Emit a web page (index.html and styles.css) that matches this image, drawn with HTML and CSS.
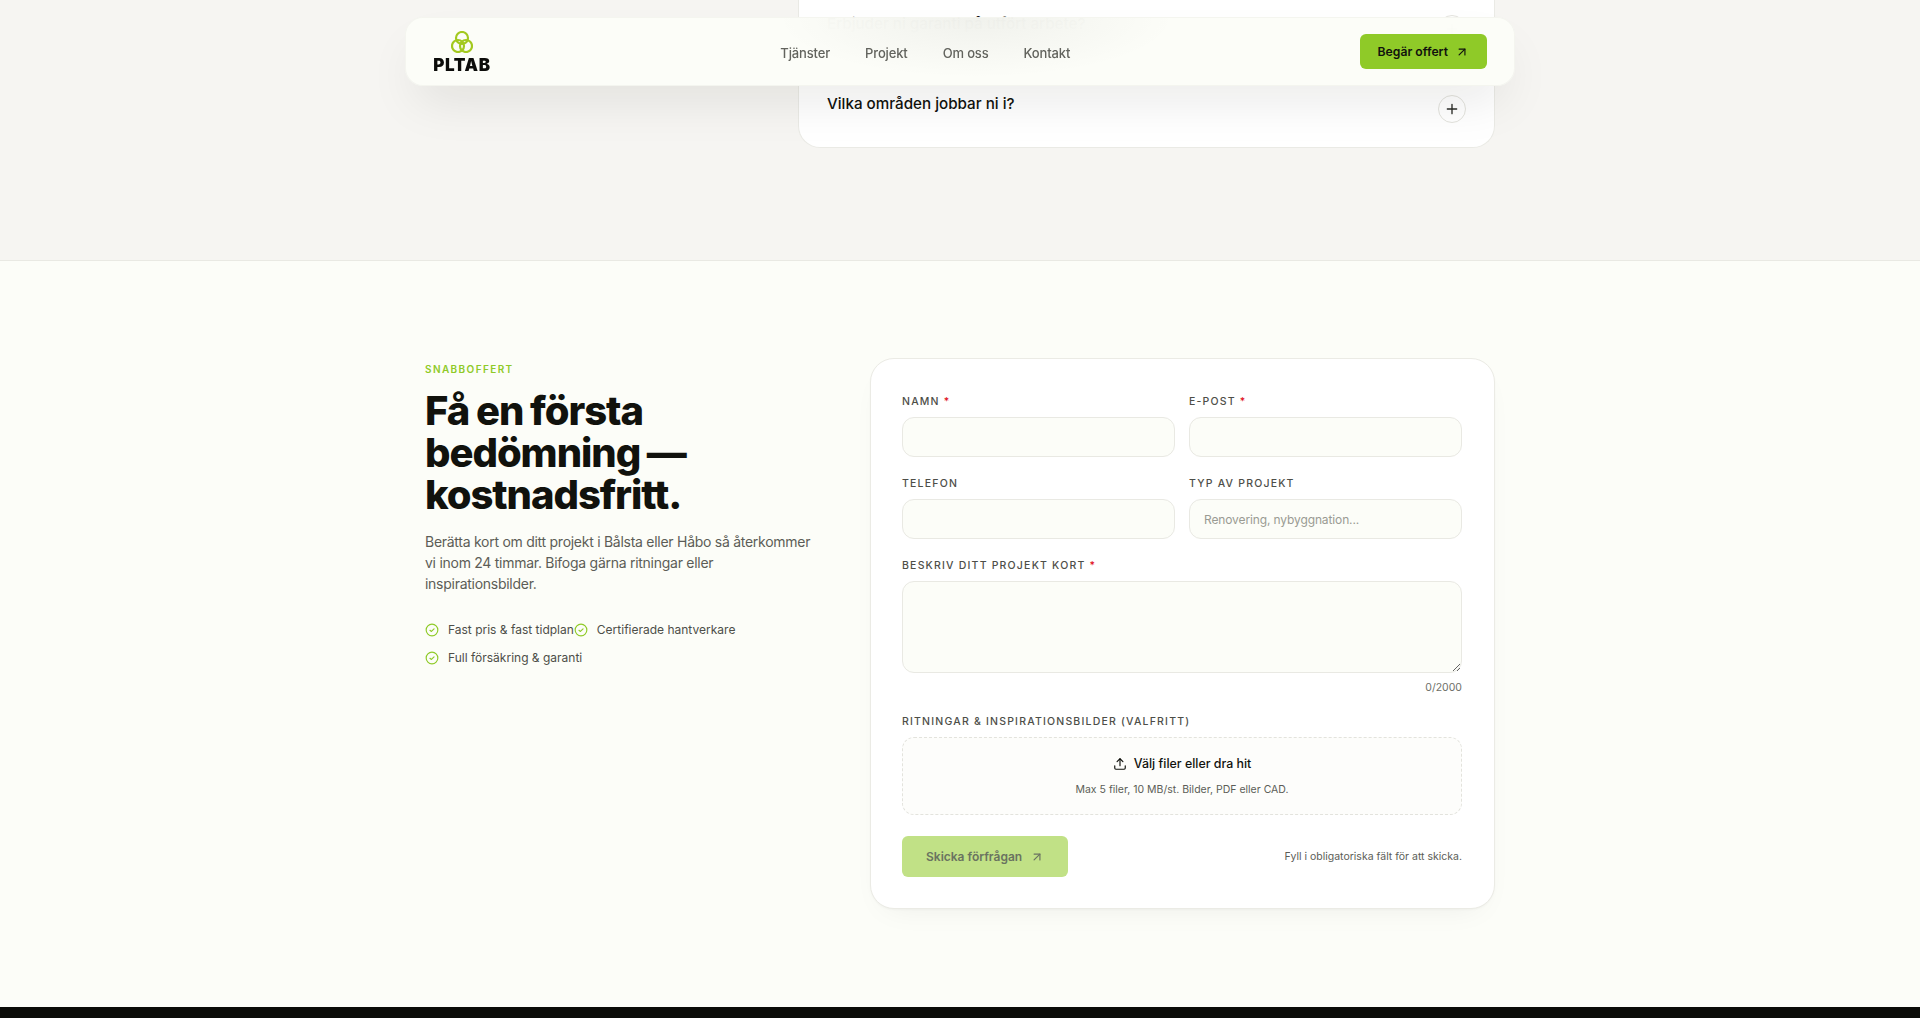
FILE: index.html
```html
<!DOCTYPE html>
<html lang="sv">
<head>
<meta charset="utf-8">
<title>PLTAB</title>
<link rel="stylesheet" href="styles.css">
</head>
<body>
<header class="nav">
  <a class="logo" href="#">
    <svg class="logo-mark" viewBox="0 0 22 22" width="22" height="22" fill="none" stroke="#a3c91f" stroke-width="2.2">
      <circle cx="11" cy="7" r="6"/>
      <circle cx="7" cy="15" r="6"/>
      <circle cx="15" cy="15" r="6"/>
    </svg>
    <span class="logo-text">PLTAB</span>
  </a>
  <nav class="nav-links">
    <a href="#">Tjänster</a>
    <a href="#">Projekt</a>
    <a href="#">Om oss</a>
    <a href="#">Kontakt</a>
  </nav>
  <a class="nav-cta" href="#">Begär offert
    <svg viewBox="0 0 24 24" width="14" height="14" fill="none" stroke="currentColor" stroke-width="2" stroke-linecap="round" stroke-linejoin="round"><path d="M7 7h10v10"/><path d="M7 17 17 7"/></svg>
  </a>
</header>

<section class="faq-section">
  <div class="container faq-grid">
    <div class="faq-card">
      <div class="faq-item faq-hidden">
        <h3>Erbjuder ni garanti på utfört arbete?</h3>
        <span class="faq-toggle"><svg viewBox="0 0 24 24" width="16" height="16" fill="none" stroke="currentColor" stroke-width="2" stroke-linecap="round"><path d="M5 12h14M12 5v14"/></svg></span>
      </div>
      <div class="faq-item">
        <h3>Vilka områden jobbar ni i?</h3>
        <span class="faq-toggle"><svg viewBox="0 0 24 24" width="16" height="16" fill="none" stroke="currentColor" stroke-width="2" stroke-linecap="round"><path d="M5 12h14M12 5v14"/></svg></span>
      </div>
    </div>
  </div>
</section>

<section class="quote-section">
  <div class="container quote-grid">
    <div class="intro">
      <p class="eyebrow">SNABBOFFERT</p>
      <h2>Få en första bedömning — kostnadsfritt.</h2>
      <p class="lead">Berätta kort om ditt projekt i Bålsta eller Håbo så återkommer vi inom 24 timmar. Bifoga gärna ritningar eller inspirationsbilder.</p>
      <ul class="perks">
        <li><svg class="check" viewBox="0 0 24 24" width="14" height="14" fill="none" stroke="#8fca28" stroke-width="2" stroke-linecap="round" stroke-linejoin="round"><circle cx="12" cy="12" r="10"/><path d="m8.5 12.5 2.5 2 4.5-4.5"/></svg>Fast pris &amp; fast tidplan</li>
        <li><svg class="check" viewBox="0 0 24 24" width="14" height="14" fill="none" stroke="#8fca28" stroke-width="2" stroke-linecap="round" stroke-linejoin="round"><circle cx="12" cy="12" r="10"/><path d="m8.5 12.5 2.5 2 4.5-4.5"/></svg>Certifierade hantverkare</li>
        <li><svg class="check" viewBox="0 0 24 24" width="14" height="14" fill="none" stroke="#8fca28" stroke-width="2" stroke-linecap="round" stroke-linejoin="round"><circle cx="12" cy="12" r="10"/><path d="m8.5 12.5 2.5 2 4.5-4.5"/></svg>Full försäkring &amp; garanti</li>
      </ul>
    </div>
    <form class="form-card">
      <div class="two-col">
        <label class="field"><span class="label">NAMN <em>*</em></span><input class="input" type="text"></label>
        <label class="field"><span class="label">E-POST <em>*</em></span><input class="input" type="email"></label>
        <label class="field"><span class="label">TELEFON</span><input class="input" type="tel"></label>
        <label class="field"><span class="label">TYP AV PROJEKT</span><input class="input" type="text" placeholder="Renovering, nybyggnation..."></label>
      </div>
      <label class="field field-desc"><span class="label">BESKRIV DITT PROJEKT KORT <em>*</em></span><textarea class="input textarea"></textarea></label>
      <p class="counter">0/2000</p>
      <div class="field">
        <span class="label">RITNINGAR &amp; INSPIRATIONSBILDER (VALFRITT)</span>
        <div class="drop">
          <div class="drop-title"><svg viewBox="0 0 24 24" width="14" height="14" fill="none" stroke="currentColor" stroke-width="2" stroke-linecap="round" stroke-linejoin="round"><path d="M21 15v4a2 2 0 0 1-2 2H5a2 2 0 0 1-2-2v-4"/><path d="m17 8-5-5-5 5"/><path d="M12 3v12"/></svg>Välj filer eller dra hit</div>
          <div class="drop-sub">Max 5 filer, 10 MB/st. Bilder, PDF eller CAD.</div>
        </div>
      </div>
      <div class="form-foot">
        <button class="submit" type="button">Skicka förfrågan
          <svg viewBox="0 0 24 24" width="14" height="14" fill="none" stroke="currentColor" stroke-width="2" stroke-linecap="round" stroke-linejoin="round"><path d="M7 7h10v10"/><path d="M7 17 17 7"/></svg>
        </button>
        <span class="hint">Fyll i obligatoriska fält för att skicka.</span>
      </div>
    </form>
  </div>
</section>
<footer class="footer"></footer>
</body>
</html>
```

FILE: styles.css
```css
* { box-sizing: border-box; }
html, body { margin: 0; height: 1018px; overflow: hidden; }
body { font-family: Inter, "Liberation Sans", sans-serif; color: #11120d; background: #fcfdf8; }
a { color: inherit; text-decoration: none; }

.container { width: 1070px; margin: 0 auto; }

.nav {
  position: fixed; z-index: 10; top: 17px; left: 405px; width: 1110px; height: 69px;
  display: flex; align-items: center; justify-content: space-between;
  padding: 0 27px 0 27px;
  background: rgba(252, 253, 248, .97);
  backdrop-filter: blur(20px);
  border: 1px solid rgba(17, 18, 13, .035);
  border-radius: 18px;
  box-shadow: 0 24px 50px -12px rgba(17, 18, 13, .10);
}
.nav::before {
  content: ""; position: absolute; top: 0; left: 370px; width: 400px; height: 60px;
  background: radial-gradient(ellipse 50% 100% at 50% 0, rgba(17, 18, 13, .05), transparent);
  pointer-events: none;
}
.logo { position: relative; display: flex; flex-direction: column; align-items: center; width: 58px; margin-top: 2px; }
.logo-mark { display: block; margin: 0 1px 2px 0; }
.logo-text { font: 900 17px/20px Inter, "Liberation Sans", sans-serif; letter-spacing: .6px; color: #0c0c0a; }
.nav-links { position: relative; display: flex; gap: 35px; font-size: 13px; font-weight: 500; letter-spacing: -.15px; color: #62635d; padding-top: 3px; }
.nav-cta {
  position: relative; display: flex; align-items: center; gap: 7px; height: 35px; padding: 0 18px;
  background: #8fca28; border-radius: 6px; font-size: 12.2px; font-weight: 600; color: #11120d;
}

.faq-section { height: 261px; background: #f6f5f2; border-bottom: 1px solid #e9e9e3; overflow: hidden; }
.faq-grid { display: flex; justify-content: flex-end; }
.faq-card {
  width: 697px; height: 148px; padding: 0 28px; display: flex; flex-direction: column;
  background: #fff; border: 1px solid #eaeae5; border-top: 0; border-radius: 0 0 22px 22px;
}
.faq-item { display: flex; justify-content: space-between; align-items: flex-start; }
.faq-item h3 { margin: 0; font-size: 15.2px; line-height: 24px; font-weight: 500; color: #11120d; }
.faq-hidden { height: 92px; padding-top: 12px; }
.faq-toggle {
  width: 28px; height: 28px; margin-top: 3px; border: 1px solid #e3e3dd; border-radius: 50%;
  display: flex; align-items: center; justify-content: center; color: #2a2b26;
}

.quote-section { padding: 97px 0 0; height: 746px; }
.quote-grid { display: flex; justify-content: space-between; align-items: flex-start; }
.intro { width: 400px; }
.eyebrow { margin: 0; padding-top: 3px; font-size: 10px; line-height: 16px; font-weight: 600; letter-spacing: 1.4px; color: #8fca28; }
.intro h2 { margin: 13px 0 0; font-size: 40px; line-height: 42px; font-weight: 800; letter-spacing: -1.05px; word-spacing: -1px; color: #11120d; }
.lead { margin: 15px 0 0; max-width: 390px; font-size: 14px; line-height: 21px; letter-spacing: -.27px; color: #5c5d57; }
.perks { list-style: none; padding: 0; margin: 27px 0 0; display: flex; flex-wrap: wrap; row-gap: 10px; font-size: 12px; line-height: 18px; color: #4d4e48; }
.perks li { display: flex; align-items: center; gap: 9px; }
.perks li:nth-child(3) { flex-basis: 100%; }
.check { flex: none; }

.form-card {
  width: 625px; height: 551px; padding: 35px 32px 31px 31px; background: #fff;
  border: 1px solid #ebebe5; border-radius: 24px;
  box-shadow: 0 1px 2px rgba(17, 18, 13, .03), 0 12px 32px -16px rgba(17, 18, 13, .08);
}
.two-col { display: grid; grid-template-columns: 1fr 1fr; gap: 19px 14px; }
.field { display: block; }
.label { display: block; font-size: 10.5px; line-height: 16px; font-weight: 500; letter-spacing: 1.2px; color: #4d4e48; margin-bottom: 7px; }
.label em { font-style: normal; color: #e0101c; }
.input {
  display: block; width: 100%; height: 40px; padding: 0 14px; background: #fcfdf8;
  border: 1px solid #e9e9e3; border-radius: 12px; font: 400 12px Inter, sans-serif; letter-spacing: -.12px; color: #11120d; outline: none;
}
.input::placeholder { color: #9a9b93; opacity: 1; }
.field-desc { margin-top: 19px; }
.textarea { height: 92px; padding: 10px 14px; resize: vertical; }
.counter { margin: 7px 0 0; text-align: right; font-size: 10.5px; line-height: 16px; color: #6e6f68; }
.counter + .field { margin-top: 18px; }
.drop {
  height: 78px; border: 1px dashed #e3e3dd; border-radius: 12px; background: #fdfdfb;
  display: flex; flex-direction: column; align-items: center; padding-top: 17px;
}
.drop-title { display: flex; align-items: center; gap: 7px; font-size: 12.4px; line-height: 18px; font-weight: 500; color: #11120d; }
.drop-sub { margin-top: 9px; font-size: 10.5px; line-height: 16px; color: #5c5d57; }
.form-foot { display: flex; justify-content: space-between; align-items: center; margin-top: 21px; }
.submit {
  display: flex; align-items: center; gap: 8px; height: 41px; padding: 0 24px; border: 0; border-radius: 6px;
  background: #c1e186; color: #6a7360; font: 600 12px Inter, sans-serif;
}
.hint { font-size: 10.5px; color: #5c5d57; }
.footer { height: 11px; background: #0b0c08; }
```
